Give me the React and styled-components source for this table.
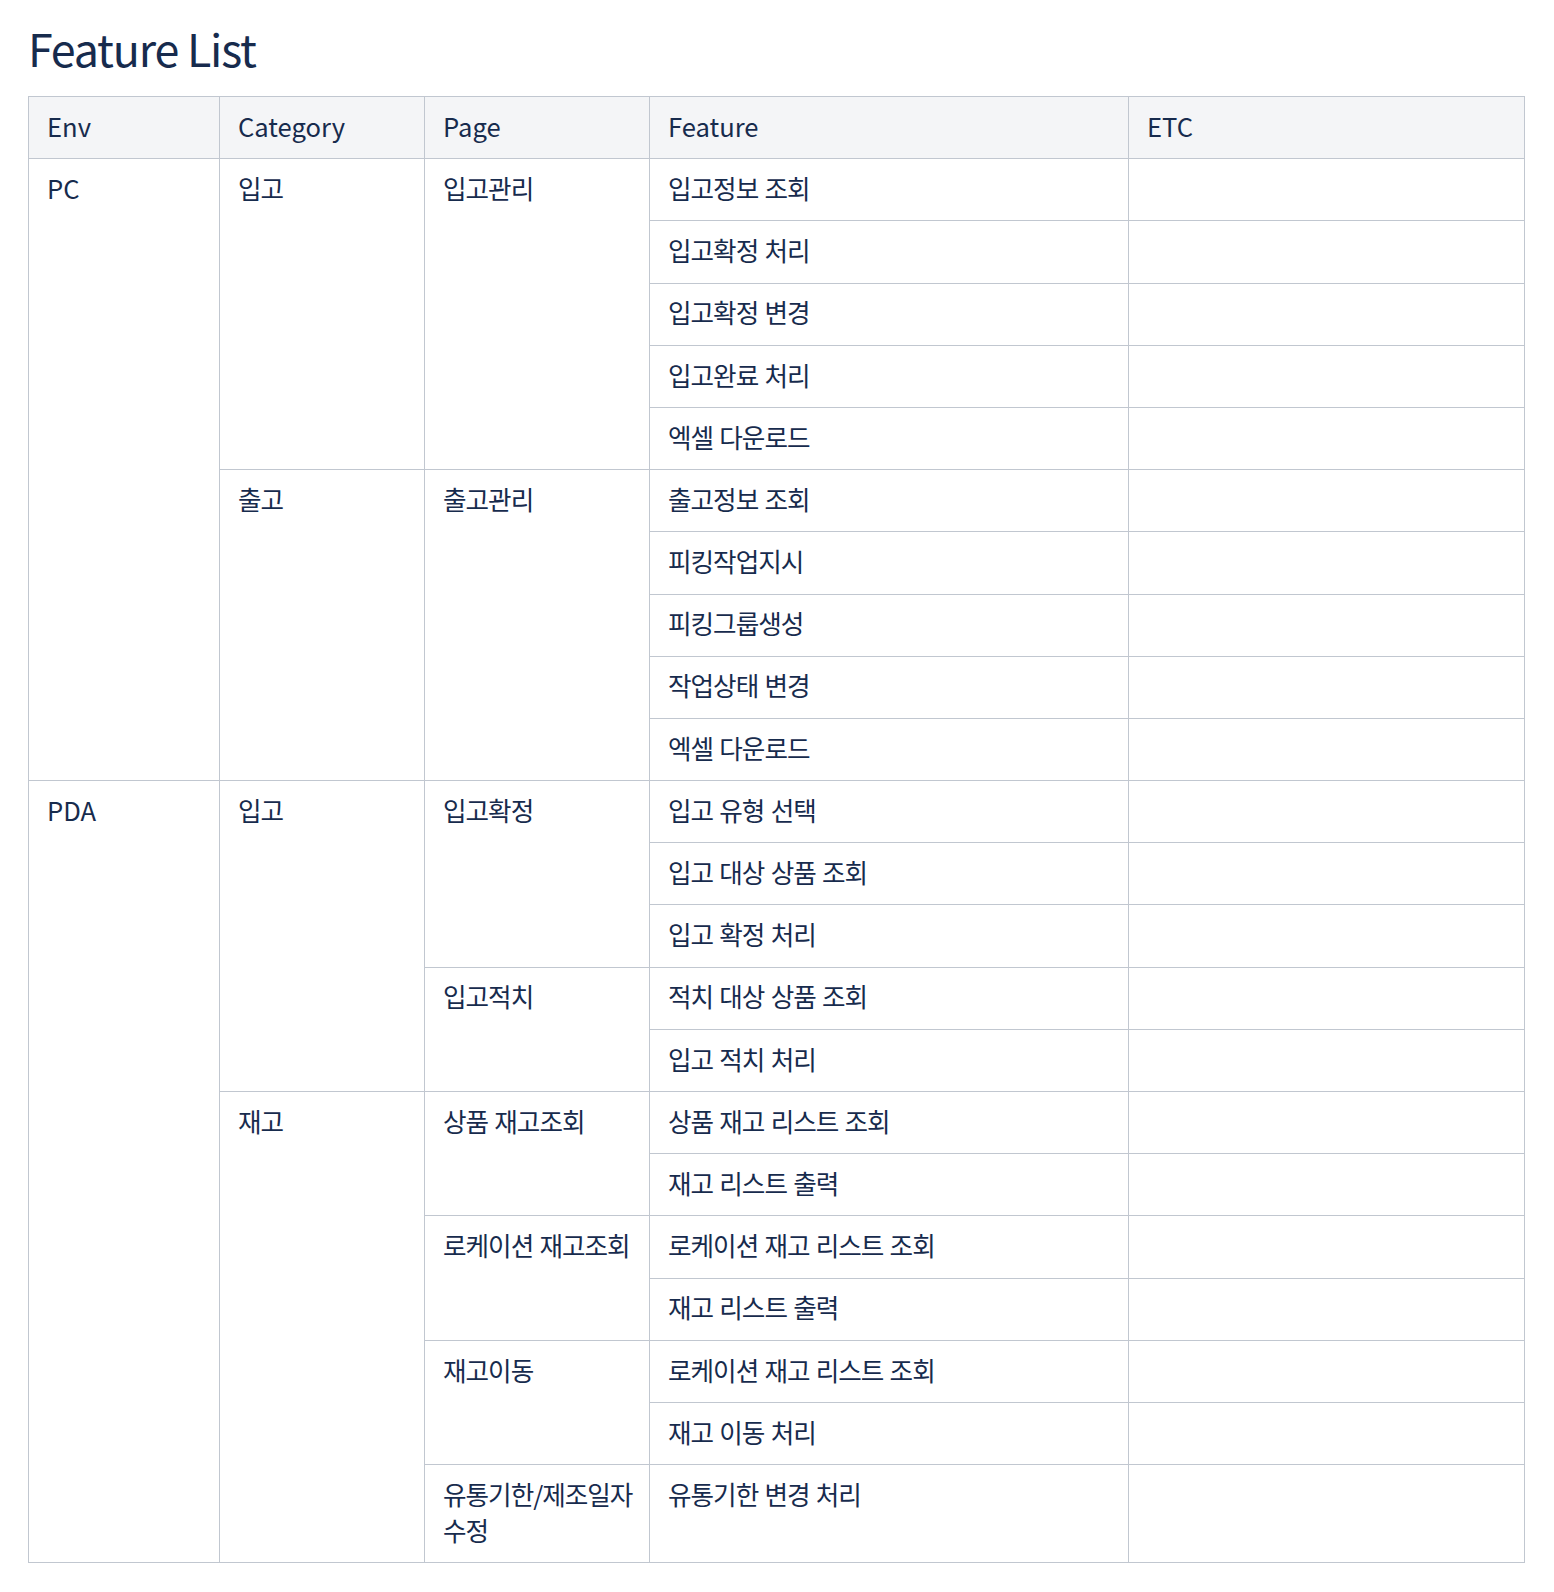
import React from "react";
import styled, { createGlobalStyle } from "styled-components";

const GlobalStyle = createGlobalStyle`
  html, body {
    margin: 0;
    padding: 0;
    background: #ffffff;
  }
  body {
    font-family: "Noto Sans CJK KR", "Noto Sans", sans-serif;
    color: #172b4d;
  }
`;

const Page = styled.div`
  padding: 21px 30px 30px 28px;
`;

const Title = styled.h1`
  margin: 0 0 21px 0;
  font-size: 44.8px;
  line-height: 54px;
  font-weight: 400;
  color: #172b4d;
  letter-spacing: -1.2px;
`;

const Table = styled.table`
  width: 1496px;
  border-collapse: collapse;
  table-layout: fixed;
  font-size: 25.6px;
  line-height: 36px;
  letter-spacing: -1px;
  word-spacing: 1.5px;
  color: #172b4d;
`;

const Col = styled.col`
  width: ${(p) => p.$w}px;
`;

const HeaderCell = styled.th`
  background: #f4f5f7;
  border: 1px solid #c1c7d0;
  padding: 10.8px 18px 14.4px 18px;
  text-align: left;
  font-weight: 400;
  vertical-align: top;
  letter-spacing: 0;
`;

const Cell = styled.td`
  border: 1px solid #c1c7d0;
  padding: 10.8px 18px 14.4px 18px;
  vertical-align: top;
  word-break: keep-all;
  white-space: ${(p) => (p.$nowrap ? "nowrap" : "normal")};
  letter-spacing: ${(p) => (p.$latin ? "0" : "-1px")};
`;

const data = [
  {
    env: "PC",
    categories: [
      {
        name: "입고",
        pages: [
          {
            name: ["입고관리"],
            features: ["입고정보 조회", "입고확정 처리", "입고확정 변경", "입고완료 처리", "엑셀 다운로드"],
          },
        ],
      },
      {
        name: "출고",
        pages: [
          {
            name: ["출고관리"],
            features: ["출고정보 조회", "피킹작업지시", "피킹그룹생성", "작업상태 변경", "엑셀 다운로드"],
          },
        ],
      },
    ],
  },
  {
    env: "PDA",
    categories: [
      {
        name: "입고",
        pages: [
          { name: ["입고확정"], features: ["입고 유형 선택", "입고 대상 상품 조회", "입고 확정 처리"] },
          { name: ["입고적치"], features: ["적치 대상 상품 조회", "입고 적치 처리"] },
        ],
      },
      {
        name: "재고",
        pages: [
          { name: ["상품 재고조회"], features: ["상품 재고 리스트 조회", "재고 리스트 출력"] },
          { name: ["로케이션 재고조회"], features: ["로케이션 재고 리스트 조회", "재고 리스트 출력"] },
          { name: ["재고이동"], features: ["로케이션 재고 리스트 조회", "재고 이동 처리"] },
          { name: ["유통기한/제조일자", "수정"], features: ["유통기한 변경 처리"] },
        ],
      },
    ],
  },
];

const countEnv = (env) =>
  env.categories.reduce((s, c) => s + c.pages.reduce((t, p) => t + p.features.length, 0), 0);
const countCat = (cat) => cat.pages.reduce((t, p) => t + p.features.length, 0);

function PageName({ lines }) {
  return lines.map((line, i) => (
    <React.Fragment key={i}>
      {i > 0 && <br />}
      {line}
    </React.Fragment>
  ));
}

function buildRows() {
  const rows = [];
  data.forEach((env) => {
    env.categories.forEach((cat, ci) => {
      cat.pages.forEach((page, pi) => {
        page.features.forEach((feat, fi) => {
          const first = fi === 0;
          rows.push(
            <tr key={`${env.env}-${cat.name}-${page.name.join("")}-${fi}`}>
              {ci === 0 && pi === 0 && first && (
                <Cell rowSpan={countEnv(env)} $latin>
                  {env.env}
                </Cell>
              )}
              {pi === 0 && first && <Cell rowSpan={countCat(cat)}>{cat.name}</Cell>}
              {first && (
                <Cell rowSpan={page.features.length} $nowrap>
                  <PageName lines={page.name} />
                </Cell>
              )}
              <Cell>{feat}</Cell>
              <Cell />
            </tr>
          );
        });
      });
    });
  });
  return rows;
}

export default function App() {
  return (
    <>
      <GlobalStyle />
      <Page>
        <Title>Feature List</Title>
        <Table>
          <colgroup>
            <Col $w={191} />
            <Col $w={205} />
            <Col $w={225} />
            <Col $w={479} />
            <Col $w={396} />
          </colgroup>
          <thead>
            <tr>
              <HeaderCell>Env</HeaderCell>
              <HeaderCell>Category</HeaderCell>
              <HeaderCell>Page</HeaderCell>
              <HeaderCell>Feature</HeaderCell>
              <HeaderCell>ETC</HeaderCell>
            </tr>
          </thead>
          <tbody>{buildRows()}</tbody>
        </Table>
      </Page>
    </>
  );
}
